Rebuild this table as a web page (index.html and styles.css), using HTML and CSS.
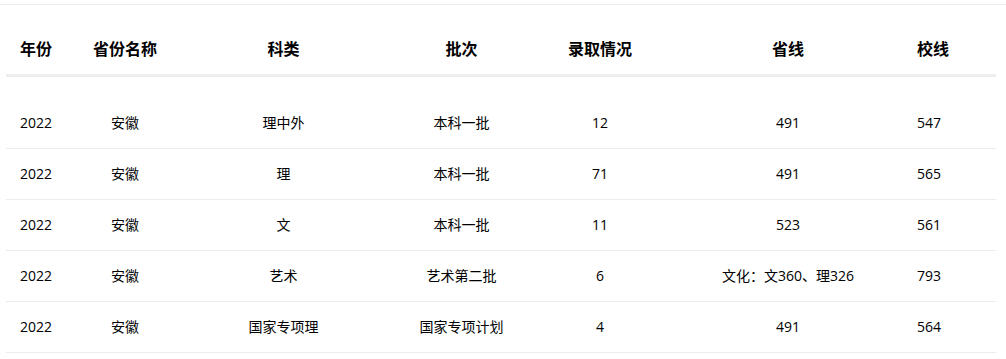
FILE: index.html
```html
<!DOCTYPE html>
<html lang="zh-CN">
<head>
<meta charset="utf-8">
<title>录取分数</title>
<link rel="stylesheet" href="styles.css">
</head>
<body>
<div class="topline"></div>
<div class="table">
  <div class="row head">
    <div class="cell">年份</div>
    <div class="cell">省份名称</div>
    <div class="cell">科类</div>
    <div class="cell">批次</div>
    <div class="cell">录取情况</div>
    <div class="cell">省线</div>
    <div class="cell">校线</div>
  </div>
  <div class="tbody">
    <div class="row">
      <div class="cell">2022</div>
      <div class="cell">安徽</div>
      <div class="cell">理中外</div>
      <div class="cell">本科一批</div>
      <div class="cell">12</div>
      <div class="cell">491</div>
      <div class="cell">547</div>
    </div>
    <div class="row">
      <div class="cell">2022</div>
      <div class="cell">安徽</div>
      <div class="cell">理</div>
      <div class="cell">本科一批</div>
      <div class="cell">71</div>
      <div class="cell">491</div>
      <div class="cell">565</div>
    </div>
    <div class="row">
      <div class="cell">2022</div>
      <div class="cell">安徽</div>
      <div class="cell">文</div>
      <div class="cell">本科一批</div>
      <div class="cell">11</div>
      <div class="cell">523</div>
      <div class="cell">561</div>
    </div>
    <div class="row">
      <div class="cell">2022</div>
      <div class="cell">安徽</div>
      <div class="cell">艺术</div>
      <div class="cell">艺术第二批</div>
      <div class="cell">6</div>
      <div class="cell">文化：文360、理326</div>
      <div class="cell">793</div>
    </div>
    <div class="row">
      <div class="cell">2022</div>
      <div class="cell">安徽</div>
      <div class="cell">国家专项理</div>
      <div class="cell">国家专项计划</div>
      <div class="cell">4</div>
      <div class="cell">491</div>
      <div class="cell">564</div>
    </div>
  </div>
</div>
</body>
</html>
```

FILE: styles.css
```css
html, body {
  margin: 0;
  padding: 0;
  background: #fff;
}

body {
  font-family: "Open Sans", "Noto Sans CJK SC", sans-serif;
  color: #000;
  font-size: 14px;
}

.topline {
  margin-top: 4px;
  border-top: 1px solid #ebebeb;
}

.table {
  margin: 21px 10px 0 6px;
}

.row {
  display: grid;
  grid-template-columns: 60px 118px 199px 157px 120px 256px 34px;
  padding-right: 46px;
  height: 50px;
  line-height: 49px;
  border-bottom: 1px solid #ececec;
}

.cell {
  text-align: center;
  white-space: nowrap;
  display: flex;
  justify-content: center;
}

.head {
  height: 48px;
  line-height: 47px;
  font-size: 16px;
  font-weight: bold;
  border-bottom: 3px solid #eeeeee;
}

.tbody {
  padding-top: 21px;
}

.tbody .cell:last-child {
  padding-right: 8px;
}
```
